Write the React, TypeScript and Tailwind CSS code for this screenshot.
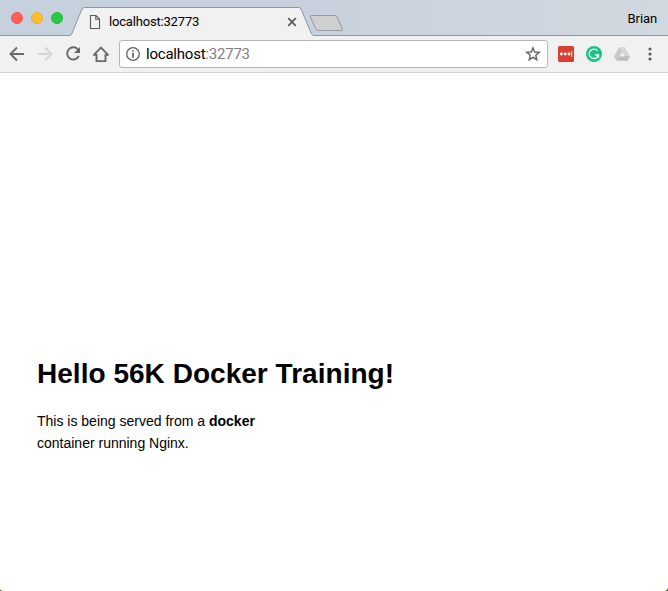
const ui = 'font-["Roboto",sans-serif]';

function TrafficLights() {
  return (
    <div className="flex gap-2 pt-3 pl-[11px]">
      <span className="size-3 rounded-full border border-[#ee5850] bg-[#ff5f57]" />
      <span className="size-3 rounded-full border border-[#eaae2b] bg-[#ffbd2e]" />
      <span className="size-3 rounded-full border border-[#27b838] bg-[#28ca41]" />
    </div>
  );
}

function Tab() {
  return (
    <div className="relative ml-[7px] h-9 w-[244px] shrink-0">
      <svg className="absolute inset-0" width="244" height="36" viewBox="0 0 244 36">
        <path d="M0 36 L1.5 34.5 L12 9 Q12.8 7.5 14.5 7.5 H228 Q230 7.5 231 9 L241.5 34 L243.5 36 Z" fill="#f1f1f1" />
        <path d="M0 35.5 L1.5 34.5 L12 9 Q12.8 7.5 14.5 7.5 H228 Q230 7.5 231 9 L241.5 34 L243.5 35.5" fill="none" stroke="#8b97a3" />
      </svg>
      <div className="relative flex h-full items-center pt-2 pl-[19px]">
        <svg width="12" height="16" viewBox="0 0 12 16" fill="none" stroke="#5b5b5b" strokeWidth="1.1">
          <path d="M1.5 1.5 H7 L10.5 5 V14.5 H1.5 Z M6.8 1.5 V5.2 H10.5" />
        </svg>
        <span className="ml-2 w-[178px] text-[13px] leading-4 tracking-[-0.18px] text-black">localhost:32773</span>
        <svg width="10" height="10" viewBox="0 0 10 10" stroke="#5a5a5a" strokeWidth="1.7">
          <path d="M1.2 1.2 L8.8 8.8 M8.8 1.2 L1.2 8.8" />
        </svg>
      </div>
    </div>
  );
}

function TabStrip() {
  return (
    <div className={`flex h-9 border-b border-[#8b97a3] bg-linear-to-r from-[#c7d0de] via-[#c9d1dd] to-[#d1d8df] ${ui}`}>
      <TrafficLights />
      <Tab />
      <svg className="mt-[14px] -ml-[5px]" width="36" height="19" viewBox="0 0 36 19">
        <path d="M3 1.5 H26 Q27.5 1.5 28.2 3 L33.4 15 Q34 16.5 32.2 16.5 H9 Q7.4 16.5 6.8 15 L1.4 3 Q.8 1.5 3 1.5 Z" fill="#cfcfcf" stroke="#939aa1" />
      </svg>
      <span className="mt-[11px] mr-[11px] ml-auto text-[13px] leading-4 tracking-[-0.1px]">Brian</span>
    </div>
  );
}

function Toolbar() {
  return (
    <div className={`flex h-[37px] items-center border-b border-[#d2d2d2] bg-[#f1f1f1] ${ui}`}>
      <svg className="ml-2" width="104" height="20" viewBox="0 0 104 20" fill="none" stroke="#696969" strokeWidth="1.9">
        <path d="M16 10 H3 M9 3.5 L2.5 10 L9 16.5" />
        <path d="M30 10 H43 M37 3.5 L43.5 10 L37 16.5" stroke="#d5d5d5" />
        <path d="M70.2 5.8 A6.1 6.1 0 1 0 70.8 12" />
        <path d="M72 3 V9 H66 Z" fill="#696969" stroke="none" />
        <path d="M85.9 10.9 L93 3.7 L100.1 10.9 M85.2 10.9 H88.5 V17.1 H97.5 V10.9 H100.8" />
      </svg>
      <div className="ml-[7px] flex h-7 w-[429px] items-center rounded-[3px] border border-[#b5b5b5] bg-white">
        <svg className="ml-[6px]" width="14" height="14" viewBox="0 0 14 14" fill="none" stroke="#5e5e5e" strokeWidth="1.3">
          <circle cx="7" cy="7" r="6.3" />
          <path d="M7 6.1 V10.7 M7 3.2 V4.8" strokeWidth="1.7" />
        </svg>
        <span className="ml-[6px] text-[15px] leading-5 tracking-[-0.22px] text-black">
          localhost<span className="text-[#808080]">:32773</span>
        </span>
        <svg className="mr-[6px] ml-auto" width="16" height="16" viewBox="0 0 16 16" fill="none" stroke="#636363" strokeWidth="1.4">
          <path d="M8 1.9 L9.7 6 L14.2 6.4 L10.8 9.3 L11.8 13.7 L8 11.4 L4.2 13.7 L5.2 9.3 L1.8 6.4 L6.3 6 Z" />
        </svg>
      </div>
      <svg className="ml-[10px]" width="16" height="16" viewBox="0 0 16 16">
        <rect width="16" height="16" rx="1.5" fill="#dc3f30" />
        <g fill="#fff">
          <circle cx="3.4" cy="8" r="1.45" />
          <circle cx="7.2" cy="8" r="1.45" />
          <circle cx="11" cy="8" r="1.45" />
          <rect x="13.3" y="5.2" width=".9" height="5.6" />
        </g>
      </svg>
      <svg className="ml-3" width="16" height="16" viewBox="0 0 16 16">
        <circle cx="8" cy="8" r="8" fill="#1dc186" />
        <path d="M11.5 4.7 A4.7 4.7 0 1 0 12.5 9 M8.8 8.9 H12.5 V11.8" fill="none" stroke="#fff" strokeWidth="1.3" />
      </svg>
      <svg className="ml-3" width="16" height="16" viewBox="0 0 16 16">
        <path d="M5.3 1 H10.7 L16 10.2 L13.3 14.8 L8 5.7 Z" fill="#d6d6d6" />
        <path d="M5.3 1 L9 7.3 L2.7 14.8 L0 10.2 Z" fill="#c8c8c8" />
        <path d="M5.3 10.2 H16 L13.3 14.8 H2.7 Z" fill="#bdbdbd" />
        <path d="M8 6.2 L10.3 10.2 H5.7 Z" fill="#f1f1f1" />
      </svg>
      <svg className="ml-[18px]" width="4" height="14" viewBox="0 0 4 14" fill="#5e5e5e">
        <circle cx="2" cy="2" r="1.6" />
        <circle cx="2" cy="7" r="1.6" />
        <circle cx="2" cy="12" r="1.6" />
      </svg>
    </div>
  );
}

export default function App() {
  return (
    <div className="flex h-[591px] w-[668px] flex-col overflow-hidden bg-white text-black">
      <TabStrip />
      <Toolbar />
      <main className='flex-1 pt-[285px] pl-[37px] font-["Liberation_Sans",Arial,sans-serif]'>
        <h1 className="text-[28px] leading-8 font-bold tracking-[0.03px] whitespace-nowrap">Hello 56K Docker Training!</h1>
        <p className="mt-5 text-sm leading-[22px]">
          This is being served from a <b>docker</b>
          <br />
          container running Nginx.
        </p>
      </main>
      <div className="flex items-end justify-between">
        <svg width="3" height="2" viewBox="0 0 3 2"><path d="M0 0 Q.5 1.5 3 2 H0 Z" fill="#587844" /></svg>
        <svg width="3" height="3" viewBox="0 0 3 3"><path d="M3 0 V3 H0 Q2 2.5 3 0 Z" fill="#3b6b28" /></svg>
      </div>
    </div>
  );
}
